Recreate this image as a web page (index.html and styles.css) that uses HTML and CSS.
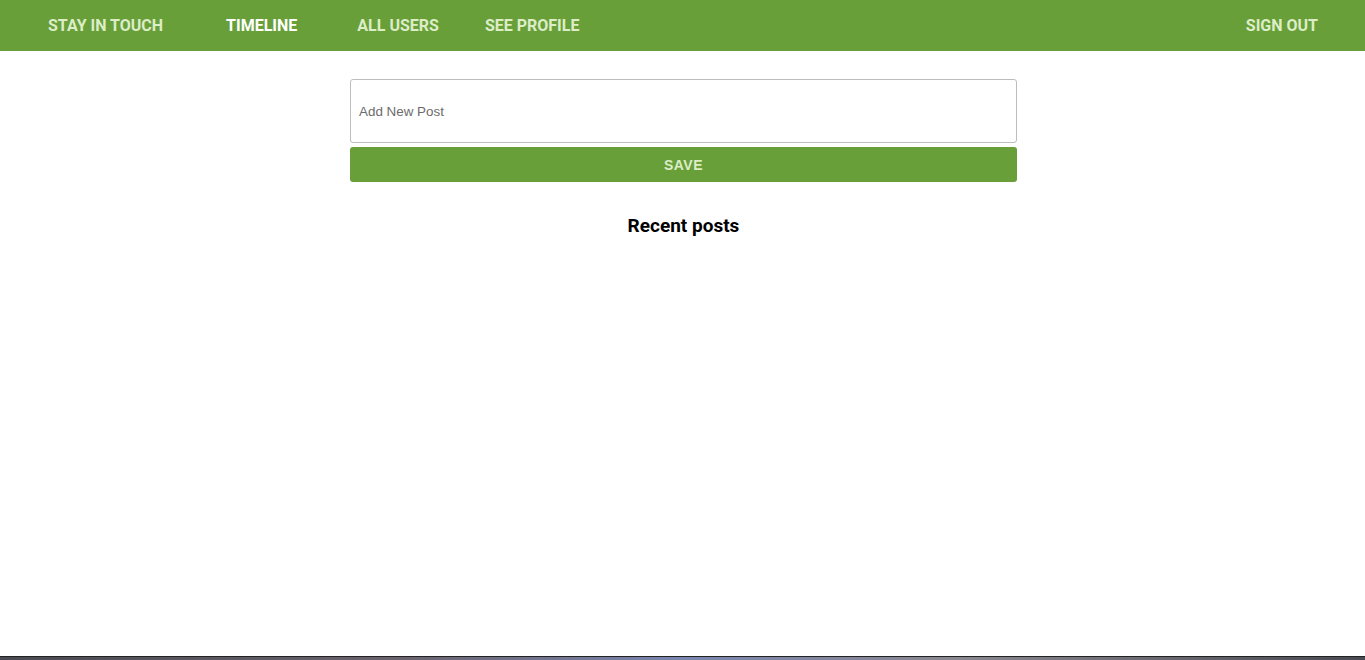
FILE: index.html
```html
<!DOCTYPE html>
<html>
<head>
<meta charset="utf-8">
<link rel="stylesheet" href="styles.css">
</head>
<body>
<nav class="navbar">
  <a class="nav-brand" href="#">STAY IN TOUCH</a>
  <a class="nav-link active" href="#">TIMELINE</a>
  <a class="nav-link users" href="#">ALL USERS</a>
  <a class="nav-link profile" href="#">SEE PROFILE</a>
  <a class="nav-link signout" href="#">SIGN OUT</a>
</nav>
<main class="main">
  <form class="post-form">
    <input class="post-input" type="text" placeholder="Add New Post">
    <button class="save-btn" type="button">SAVE</button>
  </form>
  <h2 class="recent-title">Recent posts</h2>
</main>
<div class="taskbar"></div>
</body>
</html>
```
FILE: styles.css
```css
html, body {
  margin: 0;
  padding: 0;
  height: 100%;
}
body {
  font-family: Roboto, "Liberation Sans", sans-serif;
  background: #fff;
  display: flex;
  flex-direction: column;
  overflow: hidden;
}
.navbar {
  height: 51px;
  background: #689f38;
  display: flex;
  align-items: center;
  padding: 0 47px 0 48px;
  flex-shrink: 0;
}
.navbar a {
  color: #dcedc8;
  text-decoration: none;
  font-weight: 700;
  font-size: 16px;
}
.nav-brand { margin-right: 63px; }
.navbar .active { color: #fff; margin-right: 60px; }
.users { margin-right: 46px; }
.signout { margin-left: auto; }
.main {
  flex: 1;
  display: flex;
  flex-direction: column;
  align-items: center;
  padding: 28px 0 0 2px;
}
.post-form {
  width: 667px;
  display: flex;
  flex-direction: column;
  gap: 4px;
}
.post-input {
  box-sizing: border-box;
  height: 64px;
  border: 1px solid #bdbdbd;
  border-radius: 3px;
  padding: 0 8px;
  font-family: "Liberation Sans", Arial, sans-serif;
  font-size: 13.4px;
  color: #333;
  outline: none;
}
.post-input::placeholder { color: #6b6b6b; }
.save-btn {
  height: 35px;
  border: none;
  border-radius: 3px;
  background: #689f38;
  color: #dcedc8;
  font-family: "Liberation Sans", Arial, sans-serif;
  font-weight: 700;
  font-size: 14px;
  letter-spacing: 0.5px;
  padding: 0 0 0 0;
}
.recent-title {
  margin: 32px 0 0;
  font-size: 19px;
  font-weight: 700;
  color: #000;
}
.taskbar {
  height: 3px;
  background: linear-gradient(90deg, #4a4a52, #6a6470 30%, #7a86b0 50%, #8a8890 70%, #4a4a52);
  border-top: 1px solid #222;
  flex-shrink: 0;
}
```
